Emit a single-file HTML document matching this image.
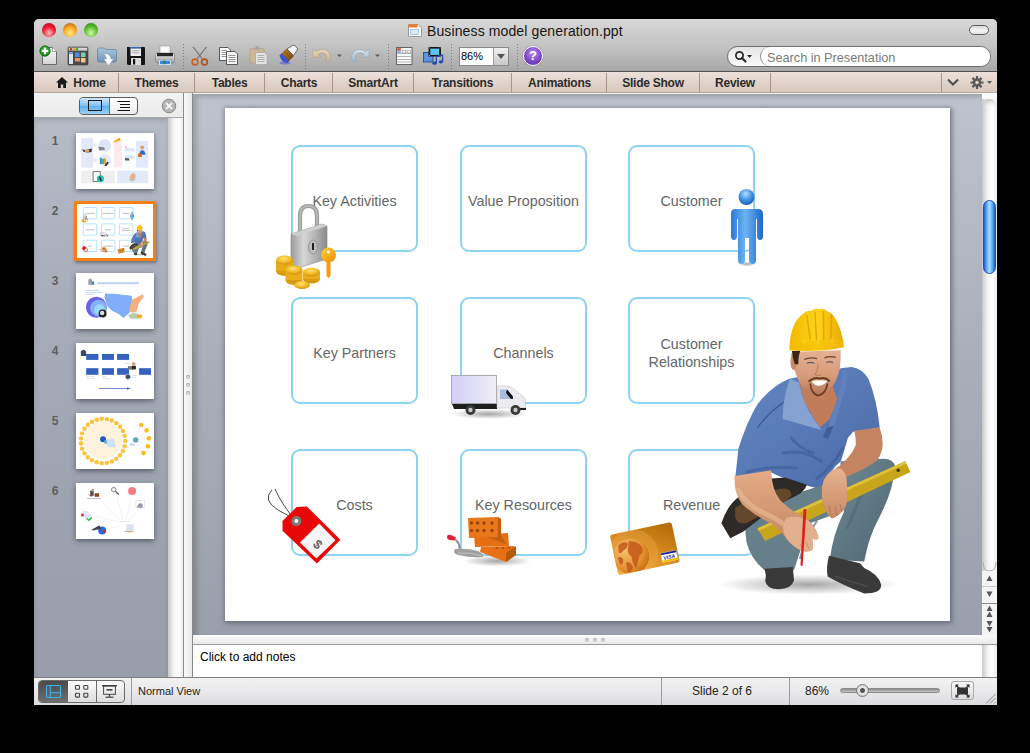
<!DOCTYPE html>
<html><head><meta charset="utf-8">
<style>
*{box-sizing:border-box}
html,body{margin:0;padding:0;width:1030px;height:753px;overflow:hidden;background:#000;font-family:"Liberation Sans",sans-serif}
.a{position:absolute}
.tl{position:absolute;width:14px;height:14px;border-radius:50%}
.tab{position:absolute;top:73px;height:21px;line-height:21px;font-weight:bold;font-size:12px;letter-spacing:-0.25px;color:#2b2b2b;text-align:center;white-space:nowrap}
.sep{position:absolute;top:73px;width:1px;height:19px;background:#a89588}
.tsep{position:absolute;top:44px;width:1px;height:25px;background:repeating-linear-gradient(#7c7c7c 0 1px,transparent 1px 3px)}
.box{position:absolute;width:127px;height:107px;border:2px solid #8fd3f4;border-radius:9px;background:transparent;display:flex;align-items:center;justify-content:center;text-align:center;font-size:14.3px;color:#666;line-height:18px;padding-top:4px}
.thumb{position:absolute;left:76px;width:78px;height:56px;background:#fff;box-shadow:0 2px 5px rgba(30,35,45,.55)}
.num{position:absolute;left:50px;width:10px;font-size:12px;font-weight:bold;color:#5e5e5e;text-align:center}
</style></head><body>
<!-- window frame -->
<div class="a" style="left:34px;top:19px;width:963px;height:686px;background:#9aa1ad;border-radius:5px 5px 0 0"></div>
<!-- title+toolbar -->
<div class="a" style="left:34px;top:19px;width:963px;height:53px;border-radius:5px 5px 0 0;background:linear-gradient(#d8d8d8,#c6c6c6 45%,#a8a8a8);border-bottom:1px solid #505050"></div>
<div class="tl" style="left:42px;top:23px;background:radial-gradient(circle at 50% 72%,#ffc2c6 0,#f31a30 50%,#9a0d18 100%)"></div>
<div class="tl" style="left:63px;top:23px;background:radial-gradient(circle at 50% 72%,#ffec8a 0,#f6a623 50%,#a4520a 100%)"></div>
<div class="tl" style="left:84px;top:23px;background:radial-gradient(circle at 50% 72%,#d2f8a8 0,#5cc12e 50%,#2a7412 100%)"></div>
<div class="a" style="left:427px;top:23px;font-size:14px;letter-spacing:.12px;color:#161616;white-space:nowrap">Business model generation.ppt</div>
<svg class="a" style="left:407px;top:22px" width="16" height="16" viewBox="0 0 16 16"><path d="M1.5 2.5 H11 L14.5 6 V14.5 H1.5 Z" fill="#fafafa" stroke="#9a9a9a"/><rect x="1.5" y="2.5" width="9" height="3" fill="#f07a2a"/><rect x="3.5" y="7.5" width="8" height="5" fill="#dde8f4" stroke="#8ab0d8" stroke-width=".6"/></svg>
<div class="a" style="left:969px;top:25px;width:20px;height:10px;border-radius:5px;border:1px solid #5e5e5e;background:linear-gradient(#d8d8d8,#f4f4f4 60%,#e0e0e0)"></div>


<!-- toolbar icons -->
<svg class="a" style="left:0;top:0" width="1030" height="100" viewBox="0 0 1030 100">
<defs>
<linearGradient id="gPage" x1="0" y1="0" x2="0" y2="1"><stop offset="0" stop-color="#fdfdfd"/><stop offset="1" stop-color="#d4d4d4"/></linearGradient>
<radialGradient id="gGreen" cx=".5" cy=".4" r=".6"><stop offset="0" stop-color="#5fd05a"/><stop offset="1" stop-color="#137a16"/></radialGradient>
<linearGradient id="gFold" x1="0" y1="0" x2="0" y2="1"><stop offset="0" stop-color="#a9c7de"/><stop offset="1" stop-color="#6f95b5"/></linearGradient>
<linearGradient id="gPrn" x1="0" y1="0" x2="0" y2="1"><stop offset="0" stop-color="#f2f2f2"/><stop offset="1" stop-color="#9a9a9a"/></linearGradient>
<linearGradient id="gBrush" x1="0" y1="0" x2="1" y2="1"><stop offset="0" stop-color="#c98a2a"/><stop offset="1" stop-color="#6b3d10"/></linearGradient>
<linearGradient id="gUndo" x1="0" y1="0" x2="0" y2="1"><stop offset="0" stop-color="#e9dcc3"/><stop offset="1" stop-color="#c8b08a"/></linearGradient>
<linearGradient id="gRedo" x1="0" y1="0" x2="0" y2="1"><stop offset="0" stop-color="#d8e6f0"/><stop offset="1" stop-color="#98b4c8"/></linearGradient>
</defs>
<!-- new doc -->
<path d="M42.5 47.5 H52.5 L56.5 51.5 V64.5 H42.5 Z" fill="url(#gPage)" stroke="#6a6a6a" stroke-width="1"/>
<path d="M52.5 47.5 V51.5 H56.5" fill="#fff" stroke="#8a8a8a" stroke-width=".8"/>
<circle cx="45" cy="51" r="5.2" fill="url(#gGreen)" stroke="#0d6b10" stroke-width=".8"/>
<path d="M45 47.8 V54.2 M41.8 51 H48.2" stroke="#fff" stroke-width="2.2"/>
<!-- gallery -->
<rect x="68" y="47" width="20" height="18" rx="1" fill="#4a4a4a" stroke="#3a3a3a" stroke-width=".6"/>
<rect x="68.7" y="47.6" width="18.6" height="3" fill="#d6d6d6"/>
<circle cx="71" cy="49.2" r="1.2" fill="#e02a10"/><circle cx="74" cy="49.2" r="1.2" fill="#f29a10"/><circle cx="77" cy="49.2" r="1.2" fill="#2aa32a"/>
<rect x="69" y="52" width="4" height="12" fill="#dfe4ee"/><rect x="69" y="52.5" width="4" height="1.3" fill="#3c7fdc"/>
<rect x="75" y="52.5" width="4.5" height="4.5" fill="#4a8ee8"/><rect x="81" y="52.5" width="4.5" height="4.5" fill="#72d6a8"/>
<rect x="75" y="58" width="5" height="3.5" fill="#f0905a"/><rect x="81" y="58" width="4.5" height="4.5" fill="#f6c88a"/>
<!-- open folder -->
<path d="M97.5 50 Q97.5 48 99.5 48 H104.5 L106 49.5 H114.5 Q116.5 49.5 116.5 51.5 V60.5 Q116.5 62 114.5 62 H99.5 Q97.5 62 97.5 60.5 Z" fill="url(#gFold)" stroke="#5d7f9c" stroke-width=".7"/>
<path d="M104 54 Q110 53 111 59 H113.5 L108.5 65.5 L103.8 59 H106.5 Q106.5 56 104 54 Z" fill="#fbfbfb" stroke="#9aa" stroke-width=".5"/>
<!-- save -->
<path d="M127 47 H144 Q145 47 145 48 V64 Q145 65 144 65 H128 L127 64 Z" fill="#161616"/>
<rect x="130.5" y="47" width="10.5" height="9" fill="#eeeeee"/>
<rect x="130.5" y="47" width="10.5" height="1.6" fill="#3765b0"/>
<path d="M132 50.8 H139.5 M132 52.8 H139.5" stroke="#8c8c8c" stroke-width=".7"/>
<rect x="131" y="58" width="10" height="7" fill="#d8d8d8"/>
<rect x="133" y="59" width="2.2" height="5.5" fill="#161616"/>
<!-- print -->
<rect x="160" y="46" width="10" height="8" fill="#fafafa" stroke="#9a9a9a" stroke-width=".6"/>
<rect x="155.5" y="53" width="19" height="10" rx="2" fill="url(#gPrn)" stroke="#7a7a7a" stroke-width=".6"/>
<rect x="157" y="53" width="16" height="3.2" fill="#262626"/>
<rect x="159" y="59.5" width="12" height="6" fill="#f4f4f4" stroke="#8a8a8a" stroke-width=".5"/>
<rect x="160" y="60.6" width="10" height="3.6" fill="#3f86d6"/><rect x="163" y="60.6" width="3" height="3.6" fill="#2a8a6a"/>
<!-- scissors -->
<path d="M193 47 L203 59.5 M206.5 47 L196.5 59.5" stroke="#6e6e6e" stroke-width="1.1"/>
<circle cx="195" cy="62" r="2.9" fill="none" stroke="#c4621e" stroke-width="1.6"/>
<circle cx="204.5" cy="62" r="2.9" fill="none" stroke="#b5501a" stroke-width="1.6"/>
<!-- copy -->
<path d="M219.5 47.5 H228 L230.5 50 V60.5 H219.5 Z" fill="#fafafa" stroke="#4a4a4a" stroke-width=".9"/>
<path d="M221.5 50.5 H227 M221.5 52.5 H228 M221.5 54.5 H228 M221.5 56.5 H228" stroke="#8a8a8a" stroke-width=".9"/>
<path d="M226.5 51.5 H235 L237.5 54 V64.5 H226.5 Z" fill="#f4f4f4" stroke="#4a4a4a" stroke-width=".9"/>
<path d="M228.5 55.5 H235.5 M228.5 57.5 H235.5 M228.5 59.5 H235.5 M228.5 61.5 H235.5" stroke="#8a8a8a" stroke-width=".9"/>
<!-- paste -->
<rect x="250" y="48.5" width="14" height="14.5" rx="1" fill="#cdb795" stroke="#b09a78" stroke-width=".6"/>
<path d="M254 50 L256 46 H258 L260 50 Z" fill="#a9a9a9"/>
<path d="M255.5 52.5 H264.5 L267 55 V64.5 H255.5 Z" fill="#e4e4e4" stroke="#a4a4a4" stroke-width=".7"/>
<path d="M257.5 55.5 H264.5 M257.5 57.5 H264.5 M257.5 59.5 H264.5 M257.5 61.5 H264.5" stroke="#a8a8a8" stroke-width=".9"/>
<!-- brush -->
<ellipse cx="285" cy="63" rx="5.5" ry="1.4" fill="#4a58e0" opacity=".55"/>
<path d="M279.5 55.5 L286.5 48.5 L294 56 L287 63 Z" fill="url(#gBrush)"/>
<path d="M282 53 L289.5 60.5 M284 51 L291.5 58.5" stroke="#5a3008" stroke-width=".6" opacity=".7"/>
<path d="M279.5 55.5 L281.5 53.5 L289 61 L287 63 Q281 62 279.5 55.5 Z" fill="#3b52d8"/>
<path d="M287 49 L292.5 45.5 Q294 44.8 295.2 46 L297 47.8 Q298 49 297.2 50.2 L293.5 55.5 Z" fill="#f4f4f4" stroke="#4a4a4a" stroke-width=".8"/>
<!-- undo -->
<path d="M313 49 L313 57 L321 57 L318 54 Q322 51.5 325.5 54 Q328 57 325 61 L328.5 62 Q332 57 329 52.5 Q324 47 316 51.5 Z" fill="url(#gUndo)" stroke="#b59c78" stroke-width=".6"/>
<path d="M337 54.5 H342 L339.5 57 Z" fill="#5a5a5a"/>
<!-- redo -->
<path d="M369 49 L369 57 L361 57 L364 54 Q360 51.5 356.5 54 Q354 57 357 61 L353.5 62 Q350 57 353 52.5 Q358 47 366 51.5 Z" fill="url(#gRedo)" stroke="#8aa4b8" stroke-width=".6"/>
<path d="M375 54.5 H380 L377.5 57 Z" fill="#5a5a5a"/>
<!-- slides -->
<rect x="396.5" y="47.5" width="15.5" height="17" fill="#fafafa" stroke="#5a5a5a" stroke-width=".9"/>
<path d="M397 53.5 H412 M397 56.5 H412 M397 59.5 H412 M397 62 H412" stroke="#9a9a9a" stroke-width=".7"/>
<rect x="397.2" y="48.2" width="3.6" height="2.6" fill="#e8441a"/>
<rect x="397.2" y="50.5" width="3.6" height="2.6" fill="#8ab6e0"/>
<rect x="402" y="50.5" width="3.5" height="2.4" fill="#fff" stroke="#777" stroke-width=".5"/>
<rect x="407" y="50.5" width="3.5" height="2.4" fill="#fff" stroke="#777" stroke-width=".5"/>
<!-- media -->
<rect x="423.5" y="52.5" width="9.5" height="9.5" fill="#5d92dc" stroke="#1e3f88" stroke-width=".8"/>
<rect x="428.5" y="47" width="12.5" height="9.5" fill="#161616"/>
<rect x="430.3" y="48.6" width="8.8" height="6.3" fill="#5cc4f0"/>
<g fill="#ddd"><rect x="429" y="47.5" width=".8" height=".8"/><rect x="429" y="55.2" width=".8" height=".8"/><rect x="439.7" y="47.5" width=".8" height=".8"/><rect x="439.7" y="55.2" width=".8" height=".8"/></g>
<path d="M436.3 63 V56.5 L442.6 55 V61.6" fill="none" stroke="#1f4fa8" stroke-width="1.3"/>
<ellipse cx="434.6" cy="63.2" rx="2.2" ry="1.6" fill="#1f4fa8"/>
<ellipse cx="440.9" cy="61.8" rx="2.2" ry="1.6" fill="#1f4fa8"/>
</svg>


<!-- toolbar separators -->
<div class="tsep" style="left:183px"></div>
<div class="tsep" style="left:305px"></div>
<div class="tsep" style="left:388px"></div>
<div class="tsep" style="left:451px"></div>
<div class="tsep" style="left:517px"></div>

<!-- zoom box -->
<div class="a" style="left:459px;top:47px;width:50px;height:19px;background:#fff;border:1px solid #8a8a8a"></div>
<div class="a" style="left:493px;top:48px;width:15px;height:17px;background:linear-gradient(#f0f0f0,#c8c8c8);border-left:1px solid #9a9a9a"></div>
<div class="a" style="left:461px;top:50px;font-size:11px;color:#000">86%</div>
<div class="a" style="left:497px;top:54px;width:0;height:0;border-left:4px solid transparent;border-right:4px solid transparent;border-top:5px solid #555"></div>
<!-- help -->
<div class="a" style="left:523px;top:46px;width:20px;height:20px;border-radius:50%;background:radial-gradient(circle at 50% 35%,#b58ee8,#7b3fc8 60%,#5a2a9a);border:1.5px solid #fff;box-shadow:0 0 1px #555;color:#fff;font-weight:bold;font-size:13px;text-align:center;line-height:17px">?</div>

<!-- search -->
<div class="a" style="left:727px;top:46px;width:264px;height:21px;border-radius:11px;background:linear-gradient(#e6e6e6,#fafafa);border:1px solid #6d6d6d"></div>
<div class="a" style="left:760px;top:47px;width:230px;height:19px;border-radius:10px;background:#fff;border-left:1px solid #8a8a8a"></div>
<div class="a" style="left:767px;top:51px;font-size:12.7px;color:#7a7a7a;white-space:nowrap">Search in Presentation</div>
<!-- search magnifier -->
<svg class="a" style="left:727px;top:46px" width="34" height="21" viewBox="0 0 34 21">
<circle cx="12.5" cy="9.5" r="3.6" fill="none" stroke="#2a2a2a" stroke-width="1.8"/>
<path d="M15 12 L18.5 15.5" stroke="#2a2a2a" stroke-width="2.2" stroke-linecap="round"/>
<path d="M20 9 H25 L22.5 12 Z" fill="#2a2a2a"/>
</svg>

<!-- tabs -->
<div class="a" style="left:34px;top:72px;width:963px;height:21px;background:linear-gradient(#ebe1da,#d8c6bb)"></div>
<div class="a" style="left:34px;top:92px;width:963px;height:1px;background:#b7a69b"></div>
<div class="tab" style="left:73px;width:33px">Home</div>
<div class="sep" style="left:118px"></div>
<div class="tab" style="left:119px;width:75px">Themes</div>
<div class="sep" style="left:194px"></div>
<div class="tab" style="left:195px;width:69px">Tables</div>
<div class="sep" style="left:264px"></div>
<div class="tab" style="left:265px;width:68px">Charts</div>
<div class="sep" style="left:332px"></div>
<div class="tab" style="left:333px;width:80px">SmartArt</div>
<div class="sep" style="left:413px"></div>
<div class="tab" style="left:414px;width:97px">Transitions</div>
<div class="sep" style="left:511px"></div>
<div class="tab" style="left:512px;width:95px">Animations</div>
<div class="sep" style="left:606px"></div>
<div class="tab" style="left:607px;width:92px">Slide Show</div>
<div class="sep" style="left:699px"></div>
<div class="tab" style="left:700px;width:70px">Review</div>
<div class="sep" style="left:770px"></div>
<div class="sep" style="left:941px"></div>


<svg class="a" style="left:55px;top:76px" width="14" height="13" viewBox="0 0 14 13"><path d="M7 1 L13 6.5 H11 V12 H8.2 V8.5 H5.8 V12 H3 V6.5 H1 Z" fill="#1a1a1a"/></svg>
<svg class="a" style="left:946px;top:76px" width="14" height="12" viewBox="0 0 14 12"><path d="M2 3.5 L7 8.5 L12 3.5" fill="none" stroke="#4a4a4a" stroke-width="2"/></svg>
<svg class="a" style="left:969px;top:74px" width="24" height="17" viewBox="0 0 24 17"><g transform="translate(8,8.5)"><circle r="4.2" fill="#5a5a5a"/><g stroke="#5a5a5a" stroke-width="2.2"><path d="M0 -6.5 V6.5 M-6.5 0 H6.5 M-4.6 -4.6 L4.6 4.6 M-4.6 4.6 L4.6 -4.6"/></g><circle r="1.8" fill="#e2d4ca"/></g><path d="M18 7 H23 L20.5 10 Z" fill="#5a5a5a"/></svg>

<!-- sidebar -->
<div class="a" style="left:34px;top:93px;width:149px;height:25px;background:linear-gradient(#f2f2f2,#ececec);border-bottom:1px solid #a8a8a8"></div>
<div class="a" style="left:34px;top:118px;width:134px;height:559px;background:linear-gradient(#b6bcc6,#a6acb8 35%,#9ca2ae 70%,#989eaa);box-shadow:inset 0 3px 4px rgba(0,0,0,.12)"></div>
<div class="a" style="left:168px;top:118px;width:15px;height:559px;background:linear-gradient(90deg,#c9c9c9,#f6f6f6 40%,#ffffff 70%,#ececec)"></div>
<div class="a" style="left:183px;top:93px;width:1px;height:584px;background:#8b8b8b"></div>
<div class="a" style="left:184px;top:93px;width:8px;height:584px;background:linear-gradient(90deg,#fafafa,#e8e8e8)"></div>
<div class="a" style="left:192px;top:93px;width:1px;height:584px;background:#888"></div>
<!-- segmented -->
<div class="a" style="left:79px;top:97px;width:59px;height:18px;border-radius:4px;border:1px solid #5c5c5c;background:linear-gradient(#fff,#ececec);overflow:hidden">
  <div class="a" style="left:0;top:0;width:29px;height:16px;background:linear-gradient(#cfe8fb,#7cc0f2 50%,#5eb1ef 52%,#9bd2f7)"></div>
  <div class="a" style="left:29px;top:0;width:1px;height:16px;background:#6b6b6b"></div>
  <div class="a" style="left:8px;top:2px;width:14px;height:11px;border:1.6px solid #111"></div>
  <svg class="a" style="left:36px;top:2px" width="16" height="13" viewBox="0 0 16 13"><path d="M1.5 1.5 H14 M4 4.5 H14 M4 7.5 H14 M1.5 10.5 H14" stroke="#111" stroke-width="1.2"/></svg>
</div>
<svg class="a" style="left:161px;top:98px" width="16" height="16" viewBox="0 0 16 16"><circle cx="8" cy="8" r="6.8" fill="#b4b4b4" stroke="#8a8a8a" stroke-width="1"/><path d="M5 5 L11 11 M11 5 L5 11" stroke="#f4f4f4" stroke-width="1.8"/></svg>

<!-- thumbnails -->
<div class="num" style="top:134px">1</div>
<div class="thumb" style="top:133px"></div>
<div class="num" style="top:204px">2</div>
<div class="a" style="left:74px;top:201px;width:82px;height:60px;background:#f57e14;box-shadow:1px 2px 3px rgba(0,0,0,.35)"></div>
<div class="a" style="left:76px;top:203px;width:78px;height:56px;background:#fff"></div>
<div class="num" style="top:274px">3</div>
<div class="thumb" style="top:273px"></div>
<div class="num" style="top:344px">4</div>
<div class="thumb" style="top:343px"></div>
<div class="num" style="top:414px">5</div>
<div class="thumb" style="top:413px"></div>
<div class="num" style="top:484px">6</div>
<div class="thumb" style="top:483px"></div>

<!-- thumb 1 -->
<svg class="a" style="left:76px;top:133px" width="78" height="56" viewBox="66 55 877 630">
<rect x="66" y="55" width="877" height="630" fill="#fff"/>
<rect x="125" y="112" width="133" height="333" fill="#e2e9f8"/>
<path d="M258 170 H290 L305 190 L290 210 H258 Z M258 335 H290 L305 357 L290 380 H258 Z" fill="#e8eef9"/>
<circle cx="390" cy="195" r="72" fill="#dde6f6"/><circle cx="390" cy="360" r="70" fill="#e6ecf8"/>
<rect x="495" y="145" width="90" height="295" fill="#fde9ee"/>
<circle cx="505" cy="150" r="14" fill="#f8c030"/><circle cx="525" cy="138" r="14" fill="#f8b020"/><circle cx="550" cy="128" r="16" fill="#f8a010"/>
<rect x="740" y="145" width="138" height="300" fill="#e2e9f8"/>
<circle cx="810" cy="218" r="22" fill="#e0a070"/><path d="M780 300 Q780 250 810 248 Q845 250 845 300 Z" fill="#2a6ad8"/><rect x="765" y="285" width="42" height="40" fill="#d86a20"/>
<path d="M135 235 L165 250 L200 240 L245 230 L240 270 L195 275 L150 265 Z" fill="#333"/><ellipse cx="190" cy="255" rx="28" ry="18" fill="#e0a070"/>
<path d="M315 210 L380 215 L395 240 L330 255 Z" fill="#888"/>
<rect x="335" y="335" width="25" height="70" fill="#3a9ad8"/><rect x="360" y="345" width="20" height="60" fill="#2ab0a0"/><rect x="380" y="340" width="22" height="65" fill="#e8a020"/><path d="M385 420 L420 375 L435 390 L405 430 Z" fill="#333"/>
<path d="M615 225 H715 L730 245 L715 262 H615 Z M615 305 H715 L730 325 L715 345 H615 Z" fill="#dbe7f8"/>
<path d="M615 340 H660 L668 365 H620 Z" fill="#555"/><path d="M618 210 L640 205 L632 225 Z" fill="#f060a0"/>
<rect x="125" y="480" width="380" height="140" fill="#efefef"/>
<rect x="258" y="490" width="80" height="110" fill="#fff" stroke="#444" stroke-width="8"/><circle cx="340" cy="570" r="40" fill="#20c0b0"/><path d="M330 545 L350 595" stroke="#222" stroke-width="14"/>
<rect x="530" y="480" width="348" height="140" fill="#e2e9f8"/>
<path d="M670 590 Q660 540 700 510 Q730 505 735 530 Q740 580 700 600 Z" fill="#e8b080"/><path d="M665 570 L700 600 L740 575 L720 560 Z" fill="#b8c8b0"/>
</svg>
<!-- thumb 2 -->
<svg class="a" style="left:76px;top:203px" width="78" height="56" viewBox="225 108 725 513">
<rect x="225" y="108" width="725" height="513" fill="#fff"/>
<g fill="none" stroke="#8fd3f4" stroke-width="6">
<rect x="292" y="146" width="125" height="105" rx="9"/><rect x="461" y="146" width="125" height="105" rx="9"/><rect x="629" y="146" width="125" height="105" rx="9"/>
<rect x="292" y="298" width="125" height="105" rx="9"/><rect x="461" y="298" width="125" height="105" rx="9"/><rect x="629" y="298" width="125" height="105" rx="9"/>
<rect x="292" y="450" width="125" height="105" rx="9"/><rect x="461" y="450" width="125" height="105" rx="9"/><rect x="629" y="450" width="125" height="105" rx="9"/>
</g>
<g fill="#c4c4c4"><rect x="315" y="196" width="80" height="10"/><rect x="468" y="196" width="110" height="10"/><rect x="660" y="196" width="62" height="10"/><rect x="315" y="348" width="80" height="10"/><rect x="494" y="348" width="58" height="10"/><rect x="660" y="338" width="58" height="10"/><rect x="650" y="356" width="82" height="10"/><rect x="337" y="500" width="35" height="10"/><rect x="478" y="500" width="92" height="10"/><rect x="664" y="500" width="52" height="10"/></g>
<use href="#art"/>
</svg>
<div class="a" style="left:74px;top:201px;width:82px;height:60px;border:3px solid #f57f12;border-radius:1px"></div>
<!-- thumb 3 -->
<svg class="a" style="left:76px;top:273px" width="78" height="56" viewBox="66 55 877 630">
<rect x="66" y="55" width="877" height="630" fill="#fff"/>
<path d="M205 190 V130 L230 115 L245 130 V190 Z" fill="#9a9a9a"/><rect x="245" y="150" width="25" height="40" fill="#4a7ac8"/>
<rect x="305" y="160" width="470" height="18" fill="#b8cdf4"/>
<rect x="180" y="184" width="650" height="3" fill="#d8e2f8"/>
<rect x="180" y="245" width="145" height="10" fill="#c0d2f4"/><rect x="180" y="268" width="185" height="10" fill="#c0d2f4"/><rect x="180" y="290" width="90" height="10" fill="#c0d2f4"/>
<path d="M395 285 L520 290 L690 310 L700 360 L690 430 L670 500 L600 560 L550 520 L470 480 L420 430 L385 330 Z" fill="#80aef8"/>
<path d="M665 480 L690 360 L730 340 L815 295 L830 320 L770 400 L745 490 L690 500 Z" fill="#f6b07a"/>
<circle cx="295" cy="440" r="118" fill="#6a62e6"/><circle cx="320" cy="450" r="95" fill="#86b0f6"/><circle cx="330" cy="465" r="60" fill="#9ad8f8"/>
<circle cx="365" cy="510" r="45" fill="#222"/><circle cx="360" cy="505" r="25" fill="#ddd"/>
<path d="M650 530 L720 500 L780 520 L760 570 L680 570 Z" fill="#b8d0b0"/><path d="M750 530 L800 520 L815 545 L790 570 L755 560 Z" fill="#f0b020"/>
</svg>
<!-- thumb 4 -->
<svg class="a" style="left:76px;top:343px" width="78" height="56" viewBox="66 55 877 630">
<rect x="66" y="55" width="877" height="630" fill="#fff"/>
<g fill="#3562c0"><rect x="180" y="178" width="138" height="67"/><rect x="358" y="178" width="135" height="67"/><rect x="528" y="178" width="135" height="67"/>
<rect x="180" y="338" width="138" height="75"/><rect x="358" y="338" width="135" height="75"/><rect x="528" y="338" width="135" height="75"/><rect x="775" y="338" width="135" height="75"/></g>
<path d="M120 200 V150 Q150 110 180 150 V200 Z" fill="#3a4a6a"/>
<rect x="650" y="315" width="60" height="40" fill="#777"/><circle cx="715" cy="290" r="20" fill="#d8a080"/><rect x="695" y="312" width="45" height="40" fill="#2a2a2a"/>
<circle cx="650" cy="435" r="25" fill="#444"/><circle cx="650" cy="435" r="30" fill="none" stroke="#8ab8f8" stroke-width="8"/>
<rect x="325" y="563" width="330" height="8" fill="#3562c0"/><path d="M640 552 L680 567 L640 582 Z" fill="#3562c0"/>
<g fill="#ccc"><rect x="180" y="430" width="90" height="6"/><rect x="180" y="450" width="100" height="6"/><rect x="358" y="430" width="45" height="6"/><rect x="358" y="450" width="80" height="6"/><rect x="620" y="285" width="55" height="6"/><rect x="690" y="420" width="60" height="6"/><rect x="690" y="440" width="50" height="6"/></g>
</svg>
<!-- thumb 5 -->
<svg class="a" style="left:76px;top:413px" width="78" height="56" viewBox="66 55 877 630">
<rect x="66" y="55" width="877" height="630" fill="#fff"/>
<circle cx="370" cy="360" r="215" fill="#fdf3dd"/>
<g fill="#fcc23c"><circle cx="620" cy="370" r="25"/><circle cx="613" cy="428" r="25"/><circle cx="593" cy="482" r="25"/><circle cx="562" cy="531" r="25"/><circle cx="519" cy="571" r="25"/><circle cx="469" cy="600" r="25"/><circle cx="413" cy="616" r="25"/><circle cx="355" cy="620" r="25"/><circle cx="298" cy="609" r="25"/><circle cx="245" cy="587" r="25"/><circle cx="198" cy="552" r="25"/><circle cx="161" cy="507" r="25"/><circle cx="135" cy="456" r="25"/><circle cx="122" cy="399" r="25"/><circle cx="122" cy="341" r="25"/><circle cx="135" cy="284" r="25"/><circle cx="161" cy="233" r="25"/><circle cx="198" cy="188" r="25"/><circle cx="245" cy="153" r="25"/><circle cx="298" cy="131" r="25"/><circle cx="355" cy="120" r="25"/><circle cx="413" cy="124" r="25"/><circle cx="469" cy="140" r="25"/><circle cx="519" cy="169" r="25"/><circle cx="562" cy="209" r="25"/><circle cx="593" cy="258" r="25"/><circle cx="613" cy="312" r="25"/></g>
<circle cx="370" cy="350" r="33" fill="#1c58c0"/><circle cx="403" cy="380" r="22" fill="#58b0d8"/><path d="M410 350 L490 345 L515 440 L420 440 Z" fill="#cce2f8"/>
<g stroke="#cfd6dc" stroke-width="4"><path d="M737 358 L800 190 M737 358 L860 250 M737 358 L885 340 M737 358 L875 430 M737 358 L825 505"/></g>
<circle cx="737" cy="358" r="30" fill="#5aa6c0"/><rect x="670" y="395" width="52" height="32" fill="#c8dcf4"/>
<g fill="#fcbc20"><circle cx="800" cy="190" r="26"/><circle cx="860" cy="250" r="26"/><circle cx="885" cy="340" r="26"/><circle cx="875" cy="430" r="26"/><circle cx="825" cy="505" r="26"/></g>
</svg>
<!-- thumb 6 -->
<svg class="a" style="left:76px;top:483px" width="78" height="56" viewBox="66 55 877 630">
<rect x="66" y="55" width="877" height="630" fill="#fff"/>
<g stroke="#d4dcec" stroke-width="4"><path d="M560 480 L340 250 M590 470 L530 210 M630 470 L685 225 M670 470 L750 380 M550 495 L285 430 M545 540 L440 565"/></g>
<rect x="225" y="140" width="40" height="60" fill="#555"/><circle cx="255" cy="135" r="15" fill="#c8a890"/><rect x="275" y="170" width="50" height="40" fill="#8a4a20"/><path d="M190 180 L250 200 L240 210 Z" fill="#e02020"/>
<rect x="190" y="225" width="160" height="6" fill="#999"/>
<circle cx="490" cy="130" r="25" fill="none" stroke="#777" stroke-width="10"/><path d="M510 150 L548 185" stroke="#555" stroke-width="14"/>
<circle cx="697" cy="145" r="45" fill="#f87a80"/>
<rect x="740" y="250" width="100" height="80" fill="#fff" stroke="#ccc" stroke-width="5"/><circle cx="790" cy="310" r="28" fill="#8a9aa8"/><circle cx="760" cy="320" r="10" fill="#f08030"/>
<rect x="135" y="370" width="70" height="70" fill="#e0e8f4"/><rect x="165" y="405" width="70" height="70" fill="#dce4f0"/><path d="M190 455 L210 475 L245 440" fill="none" stroke="#2ac030" stroke-width="14"/><rect x="125" y="400" width="28" height="30" fill="#e02a2a"/>
<circle cx="360" cy="590" r="45" fill="#2a6ad8"/><path d="M360 590 L405 590 L390 620 Z" fill="#e02020"/><path d="M240 580 L330 530 L345 570 L260 590 Z" fill="#444"/>
<path d="M630 520 H715 V600 H630 Z" fill="#dde4ee"/><path d="M610 600 H700" stroke="#a8b4c8" stroke-width="12"/><path d="M650 615 L725 600" stroke="#f0c030" stroke-width="6"/>
<rect x="560" y="485" width="110" height="8" fill="#ddd"/>
</svg>

<!-- splitter dots -->
<div class="a" style="left:186px;top:375px;width:4px;height:4px;border-radius:50%;background:radial-gradient(circle at 50% 60%,#d8d8d8 30%,#8a8a8a 80%)"></div>
<div class="a" style="left:186px;top:383px;width:4px;height:4px;border-radius:50%;background:radial-gradient(circle at 50% 60%,#d8d8d8 30%,#8a8a8a 80%)"></div>
<div class="a" style="left:186px;top:391px;width:4px;height:4px;border-radius:50%;background:radial-gradient(circle at 50% 60%,#d8d8d8 30%,#8a8a8a 80%)"></div>
<!-- main gray area -->
<div class="a" style="left:193px;top:93px;width:789px;height:542px;background:linear-gradient(#bec3cd,#a9aeb9 50%,#9aa0ab);box-shadow:inset 4px 4px 5px rgba(0,0,0,.18)"></div>
<div class="a" style="left:193px;top:93px;width:789px;height:1px;background:#f4efea"></div>
<!-- slide -->
<div class="a" style="left:225px;top:108px;width:725px;height:513px;background:#fff;box-shadow:1px 1px 5px 1px rgba(50,55,70,.55)"></div>

<!-- right scrollbar -->
<div class="a" style="left:982px;top:93px;width:15px;height:544px;background:linear-gradient(90deg,#c8c8c8,#f4f4f4 40%,#fff 70%,#eaeaea)"></div>
<div class="a" style="left:983px;top:200px;width:13px;height:74px;border-radius:7px;background:linear-gradient(90deg,#1e62d0,#7cc4fa 35%,#a8dcff 50%,#4d9df0 80%,#1f5fc8);border:1px solid #1a4fae"></div>


<!-- scrollbar details -->
<svg class="a" style="left:982px;top:93px" width="15" height="545" viewBox="982 93 15 545">
<defs><linearGradient id="capG" x1="0" y1="0" x2="1" y2="0"><stop offset="0" stop-color="#d8d8d8"/><stop offset=".5" stop-color="#fff"/><stop offset="1" stop-color="#e8e8e8"/></linearGradient>
<linearGradient id="capT" x1="0" y1="0" x2="0" y2="1"><stop offset="0" stop-color="#a8a8a8"/><stop offset="1" stop-color="#fff" stop-opacity="0"/></linearGradient></defs>
<rect x="982" y="93" width="15" height="6" fill="#fafafa"/>
<path d="M983 108 Q983 99 989.5 99 Q996 99 996 108 Z" fill="url(#capT)" opacity=".7"/>
<path d="M983 562 Q983 571 989.5 571 Q996 571 996 562" fill="none" stroke="#a8a8a8" stroke-width="1"/>
<rect x="982" y="571" width="15" height="64" fill="#f4f4f4"/>
<path d="M982 586.5 H997" stroke="#c8c8c8"/>
<path d="M982 603.5 H997" stroke="#8a8a8a"/>
<path d="M986.5 581 L989.5 575.5 L992.5 581 Z" fill="#555"/>
<path d="M986.5 591.5 L989.5 597 L992.5 591.5 Z" fill="#555"/>
<path d="M986.5 611 L989.5 605.5 L992.5 611 Z M986.5 617 L989.5 611.5 L992.5 617 Z" fill="#555"/>
<path d="M986.5 621 L989.5 626.5 L992.5 621 Z M986.5 627 L989.5 632.5 L992.5 627 Z" fill="#555"/>
</svg>

<!-- notes -->
<div class="a" style="left:193px;top:635px;width:804px;height:10px;background:linear-gradient(#fbfbfb,#e9e9e9);border-bottom:1px solid #9a9a9a"></div>
<div class="a" style="left:585px;top:638px;width:4px;height:4px;border-radius:50%;background:radial-gradient(circle at 50% 60%,#d8d8d8 30%,#8a8a8a 80%)"></div>
<div class="a" style="left:593px;top:638px;width:4px;height:4px;border-radius:50%;background:radial-gradient(circle at 50% 60%,#d8d8d8 30%,#8a8a8a 80%)"></div>
<div class="a" style="left:601px;top:638px;width:4px;height:4px;border-radius:50%;background:radial-gradient(circle at 50% 60%,#d8d8d8 30%,#8a8a8a 80%)"></div>
<div class="a" style="left:193px;top:645px;width:789px;height:32px;background:#fff"></div>
<div class="a" style="left:982px;top:645px;width:15px;height:32px;background:linear-gradient(90deg,#c8c8c8,#f4f4f4 40%,#fff 70%,#eaeaea)"></div>
<div class="a" style="left:200px;top:650px;font-size:12px;color:#000;white-space:nowrap">Click to add notes</div>

<!-- status bar -->
<div class="a" style="left:34px;top:677px;width:963px;height:28px;background:linear-gradient(#f2f2f3,#e9e9eb 50%,#dcdcde);border-top:1px solid #808080"></div>
<div class="a" style="left:38px;top:680px;width:87px;height:23px;border-radius:4px;border:1px solid #6a6a6a;background:linear-gradient(#fbfbfb,#ececec 50%,#dedede);overflow:hidden">
  <div class="a" style="left:0;top:0;width:29px;height:21px;background:linear-gradient(#4a4a4a,#6e6e6e)"></div>
  <div class="a" style="left:57px;top:0;width:1px;height:21px;background:#6a6a6a"></div>
</div>
<svg class="a" style="left:38px;top:680px" width="87" height="23" viewBox="38 680 87 23">
<rect x="46.5" y="685.5" width="14" height="12" rx="1.2" fill="none" stroke="#3cb4f0" stroke-width="1.1"/>
<path d="M50.3 685.5 V697.5 M50.3 692.8 H60.5" stroke="#3cb4f0" stroke-width="1.1"/>
<g fill="none" stroke="#444" stroke-width="1.1"><rect x="75.5" y="685.5" width="4" height="3.8" rx=".8"/><rect x="83.8" y="685.5" width="4" height="3.8" rx=".8"/><rect x="75.5" y="693.3" width="4" height="3.8" rx=".8"/><rect x="83.8" y="693.3" width="4" height="3.8" rx=".8"/></g>
<rect x="102" y="685" width="15" height="1.4" fill="#444"/>
<rect x="103.6" y="686" width="11.8" height="8.3" fill="none" stroke="#444" stroke-width="1"/>
<rect x="106.5" y="689" width="6" height="1.6" fill="#444"/>
<rect x="108.8" y="694.3" width="1.4" height="2.6" fill="#444"/>
<rect x="105.5" y="696.6" width="8" height="1.2" fill="#444"/>
</svg>
<div class="a" style="left:131px;top:678px;width:1px;height:27px;background:#9c9c9c"></div>
<div class="a" style="left:138px;top:685px;font-size:11px;color:#222;white-space:nowrap">Normal View</div>
<div class="a" style="left:661px;top:678px;width:1px;height:27px;background:#9c9c9c"></div>
<div class="a" style="left:692px;top:684px;font-size:12px;color:#222;white-space:nowrap">Slide 2 of 6</div>
<div class="a" style="left:789px;top:678px;width:1px;height:27px;background:#9c9c9c"></div>
<div class="a" style="left:805px;top:684px;font-size:12px;color:#222;white-space:nowrap">86%</div>
<div class="a" style="left:840px;top:688px;width:100px;height:5px;border-radius:3px;background:linear-gradient(#8a8a8a,#c8c8c8);border:1px solid #8a8a8a"></div>
<div class="a" style="left:856px;top:684px;width:13px;height:13px;border-radius:50%;background:radial-gradient(#555 0 2px,#e8e8e8 3px,#c8c8c8);border:1px solid #7a7a7a"></div>
<div class="a" style="left:951px;top:681px;width:23px;height:19px;border-radius:3px;border:1px solid #a8a8a8;background:linear-gradient(#f6f6f6,#dedede)"></div>

<svg class="a" style="left:951px;top:681px" width="46" height="24" viewBox="951 681 46 24">
<rect x="957" y="687.5" width="11" height="7" fill="#333"/>
<g stroke="#333" stroke-width="1.3" fill="none"><path d="M956 685 L959.5 688.5 M969 685 L965.5 688.5 M956 697 L959.5 693.5 M969 697 L965.5 693.5"/></g>
<g fill="#333"><path d="M955.5 684.5 H959 L955.5 688 Z M969.5 684.5 H966 L969.5 688 Z M955.5 697.5 H959 L955.5 694 Z M969.5 697.5 H966 L969.5 694 Z"/></g>
<g stroke="#8a8a8a" stroke-width="1"><path d="M986 703.5 L995.5 694 M990 703.5 L995.5 698 M994 703.5 L995.5 702"/></g>
</svg>
<!-- SLIDE CONTENT -->
<div class="box" style="left:291px;top:145px">Key Activities</div>
<div class="box" style="left:460px;top:145px">Value Proposition</div>
<div class="box" style="left:628px;top:145px">Customer</div>
<div class="box" style="left:291px;top:297px">Key Partners</div>
<div class="box" style="left:460px;top:297px">Channels</div>
<div class="box" style="left:628px;top:297px">Customer<br>Relationships</div>
<div class="box" style="left:291px;top:449px">Costs</div>
<div class="box" style="left:460px;top:449px">Key Resources</div>
<div class="box" style="left:628px;top:449px">Revenue</div>


<!-- slide pictures -->
<svg class="a" style="left:0;top:0" width="1030" height="753" viewBox="0 0 1030 753">
<defs>
<linearGradient id="lkBody" x1="0" y1="0" x2="1" y2="0"><stop offset="0" stop-color="#9c9c9c"/><stop offset=".35" stop-color="#d6d6d6"/><stop offset=".7" stop-color="#b0b0b0"/><stop offset="1" stop-color="#8a8a8a"/></linearGradient>
<radialGradient id="coin" cx=".45" cy=".35" r=".7"><stop offset="0" stop-color="#ffe27a"/><stop offset=".6" stop-color="#f0b820"/><stop offset="1" stop-color="#c88a08"/></radialGradient>
<linearGradient id="keyG" x1="0" y1="0" x2="1" y2="1"><stop offset="0" stop-color="#ffd23a"/><stop offset="1" stop-color="#f08a00"/></linearGradient>
<linearGradient id="personG" x1="0" y1="0" x2="1" y2="0"><stop offset="0" stop-color="#2a78d8"/><stop offset=".45" stop-color="#6cb4f4"/><stop offset="1" stop-color="#1c68c8"/></linearGradient>
<radialGradient id="headG" cx=".45" cy=".3" r=".7"><stop offset="0" stop-color="#b8e0ff"/><stop offset=".5" stop-color="#4a9ae8"/><stop offset="1" stop-color="#1a5cb8"/></radialGradient>
<linearGradient id="boxG" x1="0" y1="0" x2="1" y2="0"><stop offset="0" stop-color="#d2d0f8"/><stop offset="1" stop-color="#eeeef2"/></linearGradient>
<radialGradient id="shadowG" cx=".5" cy=".5" r=".5"><stop offset="0" stop-color="#000" stop-opacity=".35"/><stop offset="1" stop-color="#000" stop-opacity="0"/></radialGradient>
<linearGradient id="cardG" x1="1" y1="0" x2="0" y2="1"><stop offset="0" stop-color="#b06a08"/><stop offset=".5" stop-color="#d88a20"/><stop offset="1" stop-color="#f8b048"/></linearGradient>
<radialGradient id="globeG" cx=".35" cy=".3" r=".75"><stop offset="0" stop-color="#f6c070"/><stop offset=".7" stop-color="#e09030"/><stop offset="1" stop-color="#c87010"/></radialGradient>
<linearGradient id="helmetG" x1="0" y1="0" x2="1" y2="0"><stop offset="0" stop-color="#f2b800"/><stop offset=".5" stop-color="#ffd21a"/><stop offset="1" stop-color="#eaa800"/></linearGradient>
<linearGradient id="shirtG" x1="0" y1="0" x2="1" y2="1"><stop offset="0" stop-color="#6487c2"/><stop offset="1" stop-color="#4a6aa8"/></linearGradient>
<linearGradient id="pantsG" x1="0" y1="0" x2="1" y2="1"><stop offset="0" stop-color="#6f8a96"/><stop offset="1" stop-color="#4e6670"/></linearGradient>
<linearGradient id="faceG" x1="0" y1="0" x2="0" y2="1"><stop offset="0" stop-color="#e6b092"/><stop offset=".6" stop-color="#d49a78"/><stop offset="1" stop-color="#b87458"/></linearGradient>
<linearGradient id="handG" x1="0" y1="0" x2="0" y2="1"><stop offset="0" stop-color="#e6b290"/><stop offset="1" stop-color="#c88a66"/></linearGradient>
<linearGradient id="skinG" x1="0" y1="0" x2="0" y2="1"><stop offset="0" stop-color="#e4ad86"/><stop offset="1" stop-color="#c08060"/></linearGradient>
</defs>

<g id="art">
<!-- padlock + coins + key -->
<path d="M300 232 V216 Q300 206 308.5 206 Q317 206 317 216 V226" fill="none" stroke="#9e9e9e" stroke-width="4.2"/>
<path d="M300 232 V216 Q300 206 308.5 206 Q317 206 317 216 V226" fill="none" stroke="#bcbcbc" stroke-width="1.5"/>
<path d="M291 234 L322 224 L327 226 L327 259 L298 268 L291 265 Z" fill="url(#lkBody)" stroke="#888" stroke-width=".6"/>
<path d="M291 234 L322 224 L327 226 L297 236 Z" fill="#cfcfcf"/>
<ellipse cx="313" cy="247" rx="4.5" ry="7" fill="#bdbdbd" stroke="#8a8a8a" stroke-width=".8"/>
<rect x="312" y="243" width="2" height="7" fill="#222"/>
<circle cx="328.5" cy="255" r="7.5" fill="url(#keyG)"/>
<circle cx="328.5" cy="252" r="1.6" fill="#fff"/>
<path d="M326.5 261 H330.5 V276 L328.5 278 L326.5 276 Z" fill="#f39a10"/>
<g>
<ellipse cx="284.5" cy="271" rx="8.5" ry="5" fill="#d89a10"/><rect x="276" y="260" width="17" height="11" fill="#e6aa18"/><ellipse cx="284.5" cy="260" rx="8.5" ry="4.5" fill="url(#coin)"/>
<ellipse cx="294" cy="280" rx="8.5" ry="5" fill="#d89a10"/><rect x="285.5" y="270" width="17" height="10" fill="#e8ae1c"/><ellipse cx="294" cy="270" rx="8.5" ry="4.5" fill="url(#coin)"/>
<ellipse cx="311.5" cy="279" rx="8.5" ry="4.5" fill="#d89a10"/><rect x="303" y="272" width="17" height="7" fill="#e8ae1c"/><ellipse cx="311.5" cy="272" rx="8.5" ry="4.2" fill="url(#coin)"/>
<ellipse cx="302" cy="285" rx="8" ry="4" fill="url(#coin)"/>
</g>

<!-- person -->
<ellipse cx="747" cy="264" rx="9" ry="2.5" fill="url(#shadowG)"/>
<circle cx="746.5" cy="197" r="8" fill="url(#headG)"/>
<path d="M735 209 H758 Q763 209 763 214 V236 Q763 240 760 240 Q757 240 757 236 V219 H756 V260 Q756 264 752.5 264 Q749 264 749 260 V238 H745 V260 Q745 264 741.5 264 Q738 264 738 260 V219 H737 V236 Q737 240 734 240 Q731 240 731 236 V214 Q731 209 735 209 Z" fill="url(#personG)"/>

<!-- truck -->
<ellipse cx="489" cy="414" rx="38" ry="5" fill="url(#shadowG)"/>
<rect x="451.5" y="375.5" width="45" height="28" fill="url(#boxG)" stroke="#9a9a9a" stroke-width=".8"/>
<path d="M452 404 H497 V409 H454 Z" fill="#1e1e1e"/>
<path d="M497 386 H507 Q511 386 514 389 L522 396 Q526 398 525.5 403 V408 H497 Z" fill="#ececf0" stroke="#b8b8b8" stroke-width=".5"/>
<path d="M500 389.5 H507 L513 396.5 L513 399 H500 Z" fill="#a8bce0"/>
<path d="M507 389.5 L513 396.5 V399 H511 L506 393 Z" fill="#111"/>
<path d="M511 408 H526 V410 H512 Z" fill="#1e1e1e"/>
<circle cx="470.5" cy="410" r="5" fill="#3a3a3a"/><circle cx="470.5" cy="410" r="2.2" fill="#c8c8c8"/>
<circle cx="515.5" cy="410" r="5" fill="#3a3a3a"/><circle cx="515.5" cy="410" r="2.2" fill="#c8c8c8"/>

<!-- price tag -->
<path d="M272 490 Q262 500 278 510 Q290 516 296 521" fill="none" stroke="#333" stroke-width=".9"/>
<path d="M275 489 Q282 505 296 521" fill="none" stroke="#333" stroke-width=".9"/>
<path d="M296.6 507 L306.8 506.4 L340.4 539.7 L316.9 563.4 L282.5 530.7 L282.5 521.1 Z" fill="#e80808"/>
<path d="M300 542.6 L319.2 523.4 L335.5 540.3 L316.4 558.4 Z" fill="#f6f6f6"/>
<circle cx="296.4" cy="521.1" r="5" fill="#7a7a7a"/><circle cx="296.4" cy="521.1" r="2" fill="#fff"/>
<text x="318" y="549" font-size="13" font-weight="bold" fill="#666" transform="rotate(45 318 544)" text-anchor="middle" font-family="Liberation Sans">$</text>

<!-- bricks + trowel -->
<ellipse cx="497" cy="561" rx="34" ry="5.5" fill="url(#shadowG)"/>
<path d="M455.5 540 Q460 543 459.5 549 L458 551" fill="none" stroke="#8a8a8a" stroke-width="2"/>
<path d="M455 549 Q468 548 478 551 Q484 554 483 557 Q470 558 458 555 Q452 553 455 549 Z" fill="#a0a0a0"/>
<path d="M458 553 Q470 552 482 556" fill="none" stroke="#c8c8c8" stroke-width=".8"/>
<path d="M447 537 Q447 534 451 535 L456 537.5 L455 540.5 L450 540 Q447 539.5 447 537 Z" fill="#e0203a"/>
<path d="M481 547 L514 546 L516 555 L506 562 L480 552 Z" fill="#e87018"/>
<path d="M506 553 L516 546 L516 555 L506 562 Z" fill="#b85a08"/>
<g fill="#b85208"><ellipse cx="497" cy="548" rx="1.6" ry="1"/><ellipse cx="503" cy="548" rx="1.6" ry="1"/><ellipse cx="509" cy="548" rx="1.6" ry="1"/></g>
<path d="M474 535 L508 533 L509 546 L475 547 Z" fill="#e66f14"/>
<path d="M486 537 L500 534 L506 544 Z" fill="#b85a0a" opacity=".7"/>
<path d="M468 518 L498 517 L501 519 V537 L469 538 Z" fill="#e8761a"/>
<path d="M498 517 L501 519 V537 L498 538 Z" fill="#c25e0a"/>
<g fill="#9a4406"><circle cx="471.5" cy="523" r="1.7"/><circle cx="477.5" cy="523" r="1.7"/><circle cx="484" cy="523" r="1.7"/><circle cx="492" cy="523" r="1.7"/><circle cx="471.5" cy="530.5" r="1.7"/><circle cx="477.5" cy="530.5" r="1.7"/><circle cx="484" cy="530.5" r="1.7"/><circle cx="492" cy="530.5" r="1.7"/></g>

<!-- credit card -->
<g transform="translate(609.8,535.1) rotate(-12)">
<clipPath id="cardClip"><rect x="0" y="0" width="63" height="41" rx="2.5"/></clipPath>
<rect x="0" y="0" width="63" height="41" rx="2.5" fill="url(#cardG)"/>
<g clip-path="url(#cardClip)">
<circle cx="19" cy="24" r="25" fill="#f2b050" opacity=".35"/>
<circle cx="16.5" cy="25" r="18" fill="url(#globeG)"/>
<path d="M6 12 q6 -4 10 0 q-2 5 -6 6 q-3 3 -5 1 z M3 24 q4 -2 5 3 q-1 5 -4 4 z M17 10 q8 1 12 8 q1 6 -4 8 q-3 6 -6 12 q-3 -6 -2 -12 q-4 -4 -2 -10 q2 -3 2 -6 z M10 30 q5 0 6 6 q-2 5 -6 4 z" fill="#c4581a" opacity=".85"/>
</g>
<rect x="46" y="28.5" width="15.5" height="9.5" fill="#fff" stroke="#e8d8b0" stroke-width=".4"/>
<rect x="46" y="28.5" width="15.5" height="2" fill="#1a2aa8"/>
<rect x="46" y="36" width="15.5" height="2" fill="#f2c000"/>
<text x="47.5" y="35.5" font-size="5.2" font-weight="bold" font-style="italic" fill="#1a2aa8" font-family="Liberation Sans">VISA</text>
</g>

<!-- worker -->
<g transform="translate(715,300) scale(0.21254)">
<!-- shirt upper -->
<path d="M350 370 Q270 400 200 490 Q150 570 110 700 L95 841 L262 811 Q320 841 420 871 L502 891 Q540 799 592 759 Q605 719 625 649 L650 620 L775 600 Q762 470 722 370 Q692 322 642 315 L600 320 Z" fill="url(#shirtG)"/>
<path d="M150 810 Q250 780 380 790 M320 720 Q420 700 500 760 M360 650 Q400 700 460 720 M480 840 Q540 800 600 700" fill="none" stroke="#3a5894" stroke-width="14" stroke-linecap="round" opacity=".55"/>
<path d="M200 600 Q260 520 340 470" fill="none" stroke="#3b5a92" stroke-width="6"/>
<path d="M590 460 Q560 560 520 650" fill="none" stroke="#3a5690" stroke-width="26" opacity=".75"/>
<!-- neck -->
<path d="M396 388 Q430 440 486 450 Q530 440 553 405 L578 470 L540 560 L493 600 L420 480 Z" fill="#c27c5a"/>
<!-- collars -->
<path d="M352 372 Q330 430 322 490 L318 560 L500 612 L440 520 Q405 450 396 388 Z" fill="#86a2d0"/>
<path d="M600 322 Q596 400 572 470 L530 600 L560 590 Q612 460 624 336 Z" fill="#5f82bd"/>
<!-- face -->
<path d="M358 250 Q352 300 374 332 Q386 362 398 390 Q432 440 486 452 Q530 442 555 405 Q580 362 588 316 Q593 272 591 236 L372 244 Z" fill="url(#faceG)"/>
<ellipse cx="370" cy="292" rx="15" ry="36" fill="#c98a66"/>
<path d="M362 240 L402 238 Q392 262 392 302 L376 302 Q364 272 362 240 Z" fill="#3a2418"/>
<path d="M420 280 Q448 266 480 276 M515 272 Q542 262 568 270" fill="none" stroke="#6a4230" stroke-width="6"/>
<path d="M432 298 Q450 290 468 298 M524 294 Q540 287 556 294" fill="none" stroke="#4a4a62" stroke-width="5"/>
<path d="M486 300 Q480 340 470 350 Q486 360 500 352" fill="none" stroke="#b87a5a" stroke-width="5"/>
<path d="M440 384 Q468 360 492 370 Q516 360 540 382" fill="none" stroke="#6a3a20" stroke-width="9"/>
<path d="M448 392 Q452 440 486 450 Q522 440 530 392" fill="none" stroke="#6a3a20" stroke-width="8"/>
<path d="M456 382 Q490 374 528 380 Q516 402 490 404 Q466 402 456 382 Z" fill="#fff"/>
<!-- helmet -->
<path d="M350 237 C352 150 372 95 415 65 Q432 46 452 52 Q470 34 492 44 Q512 36 530 54 Q552 60 568 90 C592 130 602 180 606 222 C520 242 430 242 350 237 Z" fill="url(#helmetG)"/>
<path d="M432 70 L448 185 M470 55 L478 190 M510 52 L512 190 M548 70 L545 185" fill="none" stroke="#d8a000" stroke-width="7" opacity=".8"/>
<g fill="#ffe680" opacity=".5"><circle cx="420" cy="200" r="10"/><circle cx="485" cy="200" r="10"/><circle cx="550" cy="195" r="10"/></g>
<path d="M352 200 Q480 190 604 185 L606 222 Q480 240 350 237 Z" fill="#f2c000" opacity=".6"/>
</g>
<g transform="translate(715,440) scale(0.21254)">
<ellipse cx="440" cy="680" rx="420" ry="48" fill="url(#shadowG)"/>
<!-- right leg (back) -->
<path d="M590 100 L790 88 Q845 88 848 130 Q835 250 765 380 Q722 462 702 572 L540 562 Q556 440 606 340 Z" fill="url(#pantsG)"/>
<!-- seat + left leg -->
<path d="M140 400 Q170 330 260 280 L420 240 L570 190 L615 260 Q595 330 560 350 L450 390 Q405 500 372 612 L232 612 Q168 560 148 480 Z" fill="#657f8b"/>
<path d="M480 380 Q420 470 400 560" fill="none" stroke="#55707c" stroke-width="10" opacity=".7"/>
<path d="M700 220 Q660 330 620 420" fill="none" stroke="#4e6772" stroke-width="14" opacity=".6"/>
<!-- shoes -->
<path d="M232 606 Q244 640 236 662 Q242 702 300 702 Q360 702 372 660 L366 598 Z" fill="#393939"/>
<path d="M536 545 Q522 600 530 642 Q600 682 702 722 Q782 722 782 682 Q772 632 702 602 L682 580 Z" fill="#3a3a3a"/>
<path d="M560 640 Q650 670 720 690" fill="none" stroke="#555" stroke-width="8" opacity=".6"/>
<!-- ruler -->
<path d="M200 415 L895 100 L920 150 L235 475 Z" fill="#c9a51b"/>
<path d="M200 415 L895 100 L900 112 L205 428 Z" fill="#dfc03a"/>
<circle cx="862" cy="142" r="8" fill="#3a3000"/>
</g>
<!-- right arm (page coords) -->
<path d="M854.2 430.7 L879.7 427.5 Q884 440 882 449.8 Q880 457 876.5 461 Q868 467 860.6 470.6 L846.2 476.9 Q848 492 846.2 505.6 Q840 516 831.9 518.4 Q824 512 822.3 499.2 Q821 488 823.9 480.1 Q828 472 835 469 Q843 464 847.8 457.8 Q853 452 855.8 445 Q856 437 854.2 430.7 Z" fill="#c48462"/>
<path d="M835 469 Q843 466 846.2 476.9 Q848 492 846.2 505.6 Q840 516 831.9 518.4 Q824 512 822.3 499.2 Q821 488 823.9 480.1 Q828 472 835 469 Z" fill="url(#handG)"/>
<path d="M829 505 L831 517 M835 506 L837 516 M840 504 L842 512" stroke="#a86a4c" stroke-width=".6"/>
<g transform="translate(715,440) scale(0.21254)">
<!-- tool belt -->
<path d="M30 392 Q60 300 120 262 Q180 202 250 182 L330 176 L432 210 Q422 242 382 262 L302 302 L222 362 L132 432 L72 462 Z" fill="#2d2a27"/>
<path d="M95 320 Q150 280 230 250 L300 230 Q360 220 360 260 Q330 300 260 330 L150 390 Q100 400 95 360 Z" fill="#6b4a2c" opacity=".9"/>
<!-- pencil -->
</g>
</g>
<!-- left arm (page) -->
<path d="M734.5 476 L771 470.5 Q772 490 780 500 Q788 508 795 512 Q806 516 812 524 Q818 532 818.5 538 Q816 541 812 538 Q814 546 812 550 Q806 553 800 550 Q792 546 786 538 Q780 530 772 524 Q752 514 742 504 Q734 494 734.5 476 Z" fill="url(#skinG)"/>
<path d="M737 488 Q745 504 762 512 Q776 518 786 526" fill="none" stroke="#e8bc98" stroke-width="5" opacity=".6"/>
<path d="M786 518 Q800 514 810 522 Q818 532 818.5 538 Q816 541 812 538 Q814 546 812 550 Q806 553 800 550 Q792 546 786 538 Q780 528 786 518 Z" fill="#e2b08c"/>
<path d="M800 544 L804 551 M806 542 L809 549" stroke="#b87a5a" stroke-width=".6"/>
<path d="M803.5 509 L806.5 509.5 L802.5 566 L800.5 565.5 Z" fill="#e31b1b"/>
</svg>

</body></html>
